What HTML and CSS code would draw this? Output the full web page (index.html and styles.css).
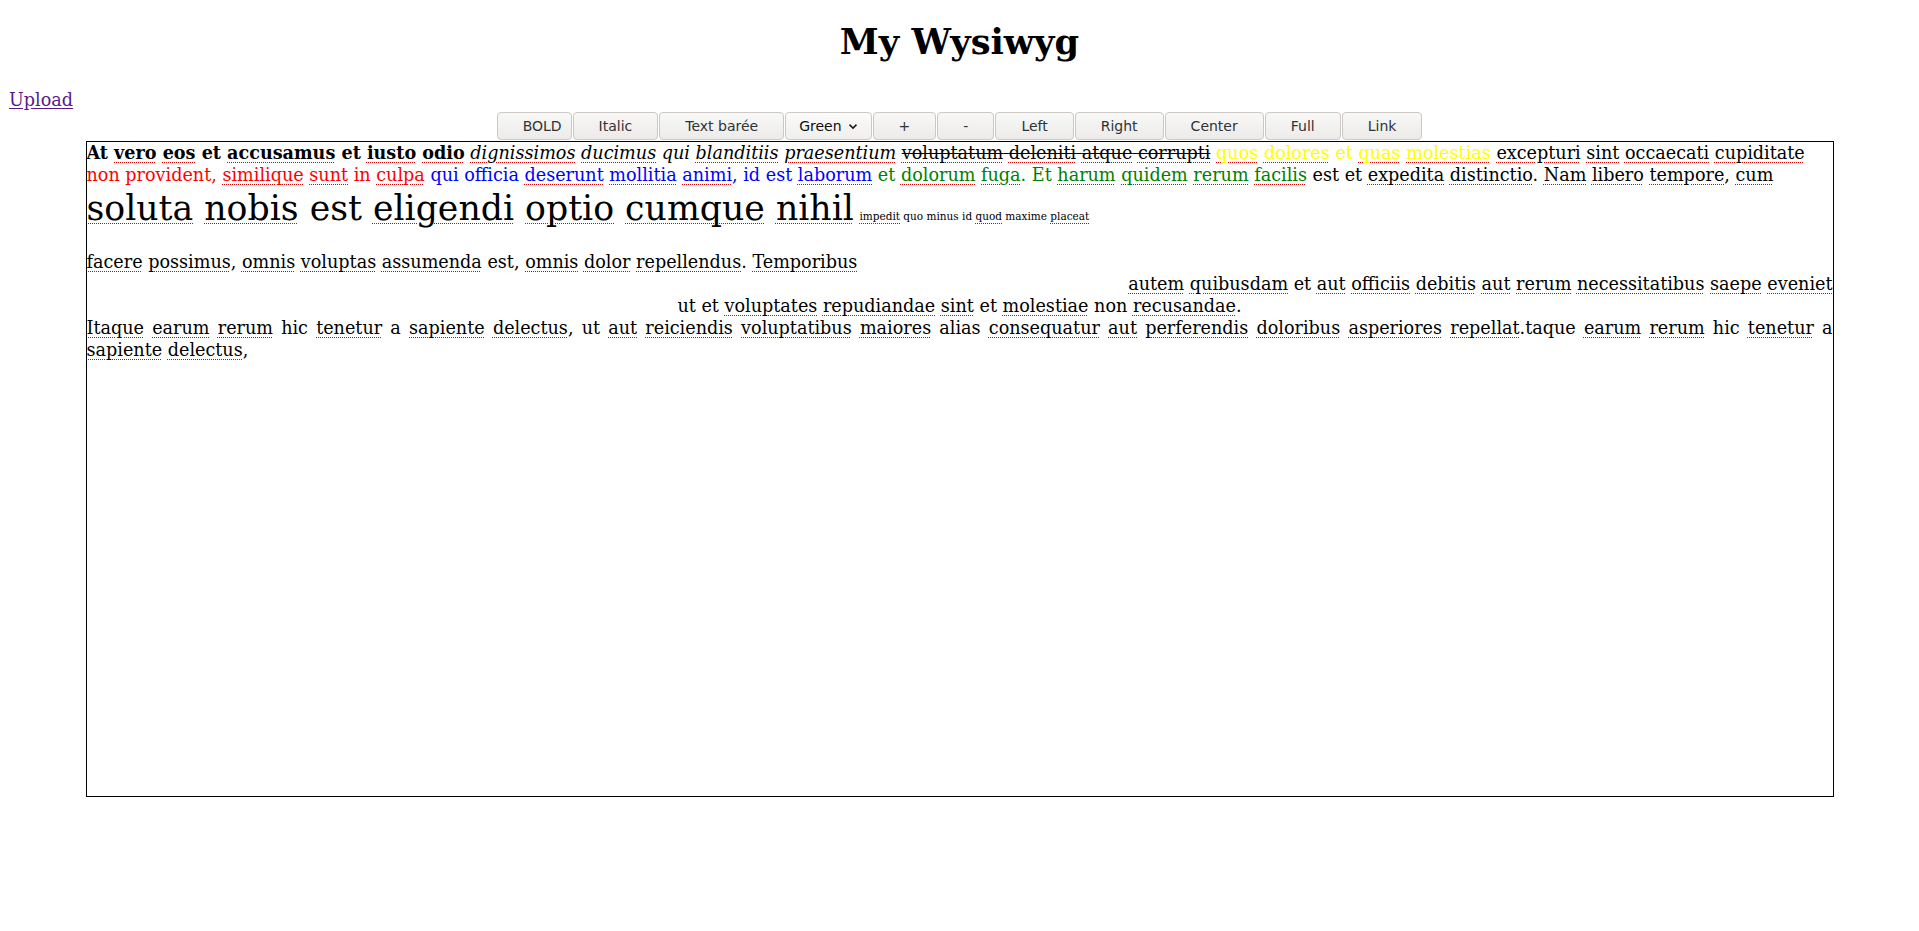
FILE: index.html
```html
<!DOCTYPE html>
<html lang="fr">
<head>
<meta charset="utf-8">
<title>My Wysiwyg</title>
<link rel="stylesheet" href="styles.css">
</head>
<body>
<h1 class="title">My Wysiwyg</h1>
<div class="upload-row"><a class="upload" href="#upload">Upload</a></div>
<div class="toolbar">
  <button class="btn btn-bold">BOLD</button>
  <button class="btn">Italic</button>
  <button class="btn">Text barée</button>
  <div class="btn select">Green <svg class="chev" width="10" height="7" viewBox="0 0 10 7"><path d="M1.5 1.6 L5 5.1 L8.5 1.6" fill="none" stroke="#1a1a1a" stroke-width="1.5"/></svg></div>
  <button class="btn">+</button>
  <button class="btn">-</button>
  <button class="btn">Left</button>
  <button class="btn">Right</button>
  <button class="btn">Center</button>
  <button class="btn">Full</button>
  <button class="btn">Link</button>
</div>
<div class="editor">
  <div class="para"><b>At <span class="sp">vero</span> <span class="sp">eos</span> et <span class="sp">accusamus</span> et <span class="sp">iusto</span> <span class="sp">odio</span></b> <i><span class="sp">dignissimos</span> <span class="sp">ducimus</span> qui <span class="sp">blanditiis</span> <span class="sp">praesentium</span></i> <s><span class="sp">voluptatum</span> <span class="sp">deleniti</span> <span class="sp">atque</span> <span class="sp">corrupti</span></s> <span class="c-yellow"><span class="sp">quos</span> <span class="sp">dolores</span> et <span class="sp">quas</span> <span class="sp">molestias</span></span> <span class="sp">excepturi</span> <span class="sp">sint</span> <span class="sp">occaecati</span> <span class="sp">cupiditate</span> <span class="c-red">non provident, <span class="sp">similique</span> <span class="sp">sunt</span> in <span class="sp">culpa</span></span> <span class="c-blue">qui officia <span class="sp">deserunt</span> <span class="sp">mollitia</span> <span class="sp">animi</span>, id est <span class="sp">laborum</span></span> <span class="c-green">et <span class="sp">dolorum</span> <span class="sp">fuga</span>. Et <span class="sp">harum</span> <span class="sp">quidem</span> <span class="sp">rerum</span> <span class="sp">facilis</span></span> est et <span class="sp">expedita</span> <span class="sp">distinctio</span>. <span class="sp">Nam</span> <span class="sp">libero</span> <span class="sp">tempore</span>, <span class="sp">cum</span> <span class="big"><span class="sp">soluta</span> <span class="sp">nobis</span> est <span class="sp">eligendi</span> <span class="sp">optio</span> <span class="sp">cumque</span> <span class="sp">nihil</span></span> <span class="small"><span class="sp">impedit</span> quo minus id <span class="sp">quod</span> maxime <span class="sp">placeat</span></span></div>
  <div class="para"><br></div>
  <div class="para"><span class="sp">facere</span> <span class="sp">possimus</span>, <span class="sp">omnis</span> <span class="sp">voluptas</span> <span class="sp">assumenda</span> est, <span class="sp">omnis</span> <span class="sp">dolor</span> <span class="sp">repellendus</span>. <span class="sp">Temporibus</span></div>
  <div class="para right"><span class="sp">autem</span> <span class="sp">quibusdam</span> et <span class="sp">aut</span> <span class="sp">officiis</span> <span class="sp">debitis</span> <span class="sp">aut</span> <span class="sp">rerum</span> <span class="sp">necessitatibus</span> <span class="sp">saepe</span> <span class="sp">eveniet</span></div>
  <div class="para center">ut et <span class="sp">voluptates</span> <span class="sp">repudiandae</span> <span class="sp">sint</span> et <span class="sp">molestiae</span> non <span class="sp">recusandae</span>.</div>
  <div class="para justify"><span class="sp">Itaque</span> <span class="sp">earum</span> <span class="sp">rerum</span> hic <span class="sp">tenetur</span> a <span class="sp">sapiente</span> <span class="sp">delectus</span>, ut <span class="sp">aut</span> <span class="sp">reiciendis</span> <span class="sp">voluptatibus</span> <span class="sp">maiores</span> alias <span class="sp">consequatur</span> <span class="sp">aut</span> <span class="sp">perferendis</span> <span class="sp">doloribus</span> <span class="sp">asperiores</span> <span class="sp">repellat</span>.taque <span class="sp">earum</span> <span class="sp">rerum</span> hic <span class="sp">tenetur</span> a <span class="sp">sapiente</span> <span class="sp">delectus</span>,</div>
</div>
</body>
</html>
```

FILE: styles.css
```css
html, body {
  background: #ffffff;
}
body {
  margin: 0 9px;
  font-family: "DejaVu Serif", serif;
  font-size: 17.6px;
  line-height: 1.25;
  color: #000000;
}
.title {
  text-align: center;
  font-size: 35.2px;
  line-height: 44px;
  font-weight: bold;
  margin: 0;
  padding: 20px 0 24px;
}
.upload-row {
  line-height: 22px;
  height: 22px;
  margin-top: 1px;
}
.upload {
  color: #551a8b;
  text-decoration: underline;
  text-underline-offset: 2px;
}
.toolbar {
  display: flex;
  justify-content: center;
  gap: 1px;
  margin: 1px 0 1px;
}
.btn {
  box-sizing: border-box;
  height: 28px;
  padding: 0 25px;
  margin: 0;
  font-family: "DejaVu Sans", sans-serif;
  font-size: 14px;
  line-height: 1;
  color: #2e3436;
  background: linear-gradient(#f8f8f7, #ecebea);
  border: 1px solid #cdc8c3;
  border-radius: 4px;
  display: flex;
  align-items: center;
  justify-content: center;
}
.btn-bold {
  padding: 0 9px 0 25px;
}
.select {
  color: #0d0d0d;
  font-size: 14px;
  padding: 0 13px 0 13px;
  gap: 6px;
  background: linear-gradient(#fbfbfa, #f0efee);
}
.chev {
  display: block;
}
.editor {
  width: 1746px;
  height: 654px;
  margin: 0 auto;
  border: 1px solid #000000;
  overflow: hidden;
}
.right {
  text-align: right;
}
.center {
  text-align: center;
}
.justify {
  text-align: justify;
}
.sp {
  text-decoration-line: underline;
  text-decoration-style: dotted;
  text-decoration-color: #e00000;
  text-decoration-thickness: 1px;
  text-underline-offset: 3px;
}
.c-yellow { color: #ffff00; }
.c-red { color: #ff0000; }
.c-blue { color: #0000ff; }
.c-green { color: #008000; }
.big { font-size: 34.7px; }
.small { font-size: 10.5px; }
```
